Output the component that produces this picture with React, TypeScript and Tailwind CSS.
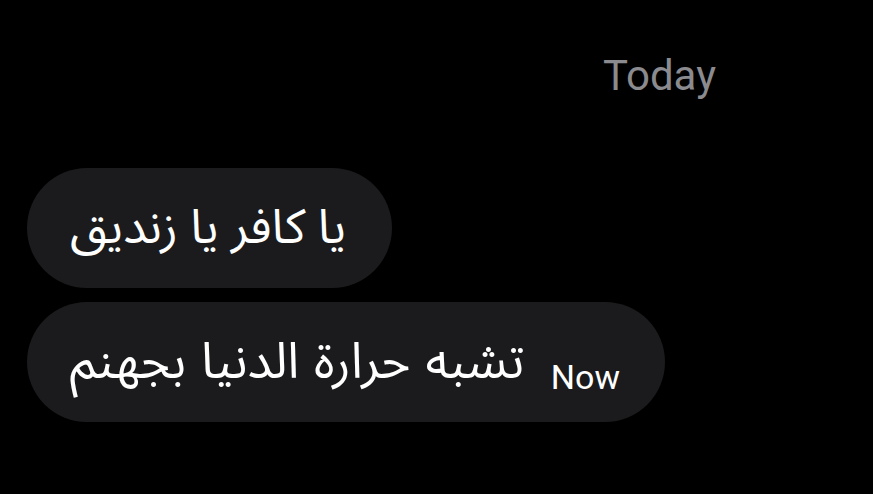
const messages = [
  { text: 'يا كافر يا زنديق', width: 'w-[365px]', size: 'text-[48px]' },
  { text: 'تشبه حرارة الدنيا بجهنم', width: 'w-[638px]', size: 'text-[50px] [word-spacing:2px]', time: 'Now' },
]

const App = () => {
  return (
    <div className="h-[494px] w-[873px] overflow-hidden bg-black font-['Roboto','Noto_Sans',sans-serif]">
      <div className="ml-[546px] w-[227px] pt-[52px] text-center text-[42px] leading-[48px] text-[#8a8a8f]">
        Today
      </div>
      <div className="mt-[68px] flex flex-col items-start gap-[14px] pl-[27px]">
        {messages.map((m, i) => (
          <div
            key={i}
            className={`flex h-[120px] items-center justify-between rounded-full bg-[#1b1b1d] pl-[43px] pr-[45px] ${m.width}`}
          >
            <span
              dir="rtl"
              className={`font-['Noto_Sans_Arabic','DejaVu_Sans',sans-serif] leading-none text-white ${m.size}`}
            >
              {m.text}
            </span>
            {m.time && (
              <span className="mt-[30px] text-[34px] leading-none text-white">{m.time}</span>
            )}
          </div>
        ))}
      </div>
    </div>
  )
}

export default App
